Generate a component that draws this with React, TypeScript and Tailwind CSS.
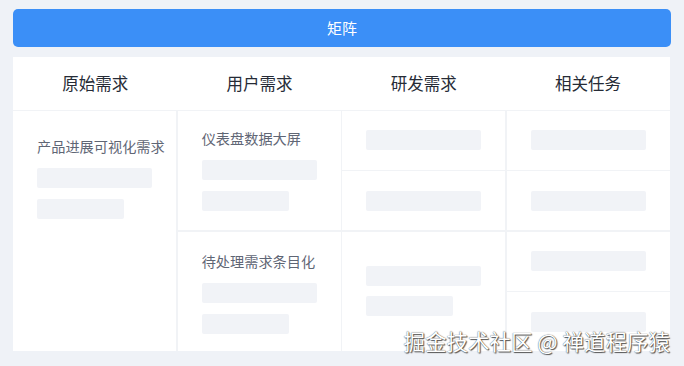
const font = { fontFamily: '"Noto Sans CJK SC", "Noto Sans", sans-serif' };

function Bar({ w }: { w: 'long' | 'short' }) {
  return <div className={`h-5 rounded-[2px] bg-[#f1f3f7] ${w === 'long' ? 'w-[115px]' : 'w-[87px]'}`} />;
}

function Req({ title, className = '' }: { title: string; className?: string }) {
  return (
    <div className={`bg-white px-6 ${className}`}>
      <div className="whitespace-nowrap text-[14.2px] leading-5 text-[#5f6675]">{title}</div>
      <div className="mt-3 flex flex-col gap-[11px]">
        <Bar w="long" />
        <Bar w="short" />
      </div>
    </div>
  );
}

function Slot({ className = '', two = false }: { className?: string; two?: boolean }) {
  return (
    <div className={`flex flex-col justify-center gap-[10px] bg-white px-6 ${className}`}>
      <Bar w="long" />
      {two && <Bar w="short" />}
    </div>
  );
}

export default function App() {
  const heads = ['原始需求', '用户需求', '研发需求', '相关任务'];

  return (
    <main className="relative h-[366px] w-[684px] overflow-hidden bg-[#eff2f7] px-[13px] pt-[9px]" style={font}>
      <div className="flex h-[38px] w-[658px] items-center justify-center rounded-[5px] bg-[#3b8ff7] text-[15px] text-white">
        矩阵
      </div>

      <div className="mt-[10px] w-[657px] bg-[#f1f3f6]">
        <div className="grid h-[53px] grid-cols-4 bg-white">
          {heads.map((h) => (
            <div key={h} className="flex items-center justify-center text-[16.5px] text-[#262b36]">
              {h}
            </div>
          ))}
        </div>

        <div className="mt-px grid h-[240px] grid-cols-4 grid-rows-4 gap-[1.5px]">
          <Req title="产品进展可视化需求" className="row-span-4 pt-[25px]" />
          <Req title="仪表盘数据大屏" className="row-span-2 pt-[17px]" />
          <Slot />
          <Slot />
          <Slot />
          <Slot />
          <Req title="待处理需求条目化" className="row-span-2 pt-[19px]" />
          <Slot className="row-span-2" two />
          <Slot />
          <Slot />
        </div>
      </div>

      <div className="absolute right-[14px] bottom-[13px] whitespace-nowrap text-[21.5px] leading-6 text-white [text-shadow:0_0_1px_#333,1px_1px_1px_#555]">
        掘金技术社区 @ 禅道程序猿
      </div>
    </main>
  );
}
